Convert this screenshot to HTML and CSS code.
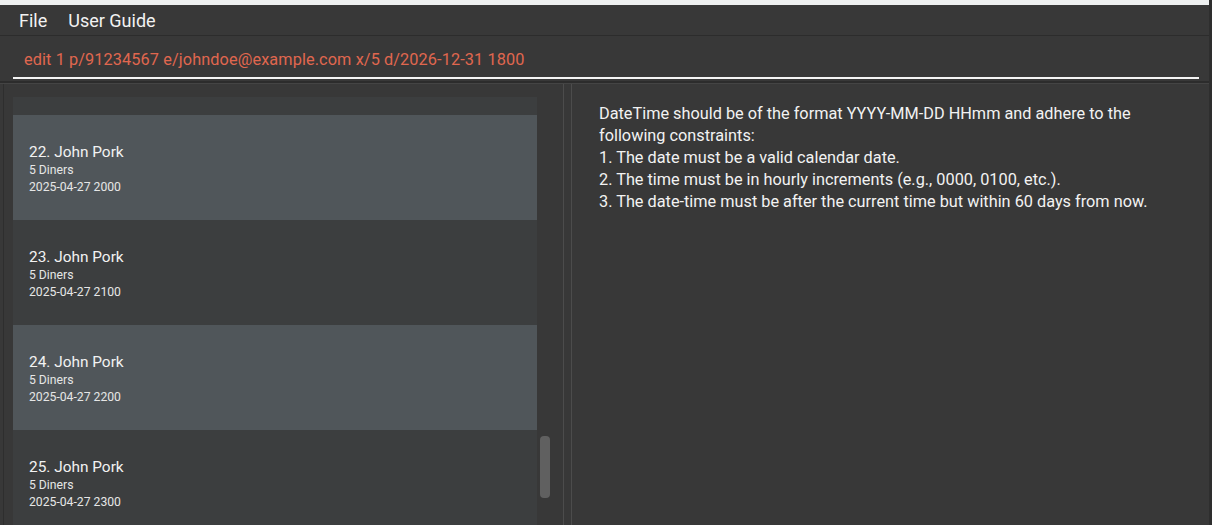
FILE: index.html
```html
<!DOCTYPE html>
<html>
<head>
<meta charset="utf-8">
<link rel="stylesheet" href="styles.css">
</head>
<body>
<div class="window">
  <div class="topstrip"></div>
  <div class="menubar">
    <span class="menu-item">File</span>
    <span class="menu-item">User Guide</span>
  </div>
  <div class="command">
    <div class="command-field">edit 1 p/91234567 e/johndoe@example.com x/5 d/2026-12-31 1800</div>
  </div>
  <div class="main">
    <div class="left">
      <div class="list">
        <div class="card dark partial"></div>
        <div class="card light">
          <div class="name">22. John Pork</div>
          <div class="small">5 Diners</div>
          <div class="small">2025-04-27 2000</div>
        </div>
        <div class="card dark">
          <div class="name">23. John Pork</div>
          <div class="small">5 Diners</div>
          <div class="small">2025-04-27 2100</div>
        </div>
        <div class="card light">
          <div class="name">24. John Pork</div>
          <div class="small">5 Diners</div>
          <div class="small">2025-04-27 2200</div>
        </div>
        <div class="card dark">
          <div class="name">25. John Pork</div>
          <div class="small">5 Diners</div>
          <div class="small">2025-04-27 2300</div>
        </div>
      </div>
      <div class="scroll">
        <div class="thumb"></div>
      </div>
    </div>
    <div class="divider"></div>
    <div class="right">
      <p class="result">DateTime should be of the format YYYY-MM-DD HHmm and adhere to the<br>following constraints:<br>1. The date must be a valid calendar date.<br>2. The time must be in hourly increments (e.g., 0000, 0100, etc.).<br>3. The date-time must be after the current time but within 60 days from now.</p>
    </div>
  </div>
</div>
</body>
</html>
```

FILE: styles.css
```css
html, body {
  margin: 0;
  padding: 0;
  background: #383838;
  overflow: hidden;
}
body {
  font-family: Roboto, "Liberation Sans", sans-serif;
  color: #f0f0f0;
}
.window {
  width: 1212px;
  height: 525px;
  display: flex;
  flex-direction: column;
  background: #383838;
  border-right: 3px solid #2e2e2e;
  box-sizing: border-box;
}
.topstrip {
  height: 5px;
  background: #eef0f0;
  flex: none;
}
.menubar {
  height: 31px;
  flex: none;
  display: flex;
  align-items: center;
  gap: 21px;
  padding-left: 19px;
  border-bottom: 1px solid #2c2c2c;
  box-sizing: border-box;
  font-size: 18px;
  color: #f2f2f2;
}
.command {
  height: 47px;
  flex: none;
  padding: 0 10px 0 13px;
  box-sizing: border-box;
  border-bottom: 2px solid #2c2c2c;
}
.command-field {
  height: 43px;
  border-bottom: 2px solid #f4f4f4;
  box-sizing: border-box;
  padding: 14px 0 0 11px;
  font-size: 16.3px;
  color: #e0674f;
  letter-spacing: 0.1px;
}
.main {
  flex: 1;
  display: flex;
  min-height: 0;
  border-top: 1px solid #444;
}
.left {
  width: 560px;
  margin-left: 3px;
  display: flex;
  padding-top: 13px;
  box-sizing: border-box;
  border-left: 1px solid #2e2e2e;
}
.list {
  width: 524px;
  margin-left: 9px;
  display: flex;
  flex-direction: column;
  overflow: hidden;
}
.card {
  height: 105px;
  flex: none;
  padding: 28px 0 0 16px;
  box-sizing: border-box;
}
.card.partial {
  height: 18px;
  padding: 0;
}
.card.light {
  background: #50565a;
}
.card.dark {
  background: #3c3e3f;
}
.name {
  font-size: 15.4px;
  line-height: 18px;
  color: #f2f2f2;
}
.small {
  font-size: 12.2px;
  line-height: 17px;
  color: #e6e6e6;
}
.name + .small {
  margin-top: 1px;
}
.scroll {
  width: 16px;
  padding-left: 3px;
  box-sizing: border-box;
}
.thumb {
  width: 10px;
  height: 62px;
  margin-top: 339px;
  background: #606060;
  border-radius: 4px;
}
.divider {
  width: 9px;
  border-left: 1px solid #4c4c4c;
  border-right: 1px solid #4c4c4c;
  box-sizing: border-box;
  flex: none;
}
.right {
  flex: 1;
  padding: 19px 0 0 27px;
  box-sizing: border-box;
}
.result {
  margin: 0;
  font-size: 16.3px;
  line-height: 22px;
  color: #f2f2f2;
}
```
